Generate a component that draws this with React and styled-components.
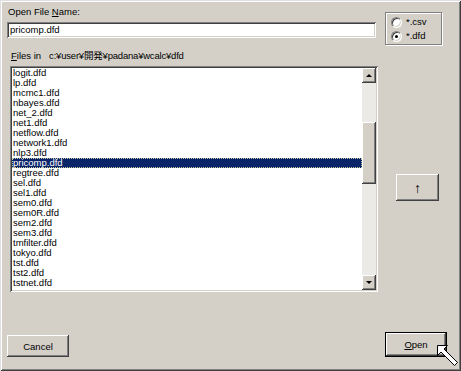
import styled, { createGlobalStyle } from "styled-components";

const files = [
  "logit.dfd", "lp.dfd", "mcmc1.dfd", "nbayes.dfd", "net_2.dfd", "net1.dfd",
  "netflow.dfd", "network1.dfd", "nlp3.dfd", "pricomp.dfd", "regtree.dfd",
  "sel.dfd", "sel1.dfd", "sem0.dfd", "sem0R.dfd", "sem2.dfd", "sem3.dfd",
  "tmfilter.dfd", "tokyo.dfd", "tst.dfd", "tst2.dfd", "tstnet.dfd",
];

const Global = createGlobalStyle`
  html, body { margin: 0; padding: 0; background: #d4d0c8; }
  body {
    font-family: "Liberation Sans", "Noto Sans CJK JP", sans-serif;
    font-size: 9.5px;
    color: #000;
  }
`;

export default function App() {
  return (
    <>
      <Global />
      <Window>
        <TopRow>
          <NameCol>
            <Label>Open File <u>N</u>ame:</Label>
            <TextInput>pricomp.dfd</TextInput>
          </NameCol>
          <TypeBox>
            <RadioRow><Radio /><span>*.csv</span></RadioRow>
            <RadioRow><Radio checked /><span>*.dfd</span></RadioRow>
          </TypeBox>
        </TopRow>

        <MiddleRow>
          <ListCol>
            <FilesLabel>
              <span><u>F</u>iles in</span>
              <Path>c:¥user¥開発¥padana¥wcalc¥dfd</Path>
            </FilesLabel>
            <ListBox>
              <Items>
                {files.map((f) => (
                  <Item key={f} selected={f === "pricomp.dfd"}>{f}</Item>
                ))}
              </Items>
              <ScrollBar>
                <ArrowBtn><Tri up /></ArrowBtn>
                <Track><Thumb /></Track>
                <ArrowBtn><Tri /></ArrowBtn>
              </ScrollBar>
            </ListBox>
          </ListCol>
          <UpButton>↑</UpButton>
        </MiddleRow>

        <BottomRow>
          <Button>Cancel</Button>
          <DefaultButton><u>O</u>pen</DefaultButton>
        </BottomRow>

        <Cursor width="24" height="24" viewBox="0 0 24 24">
          <polygon
            points="0.5,0.5 10.5,0.5 7,4 20.5,17.5 17.5,20.5 4,7 0.5,10.5"
            fill="#fff"
            stroke="#000"
            strokeWidth="1"
          />
        </Cursor>
      </Window>
    </>
  );
}

const raised = `
  background: #d4d0c8;
  box-shadow: inset -1px -1px #404040, inset 1px 1px #fff, inset -2px -2px #808080;
`;

const sunken = `
  box-shadow: inset 1px 1px #808080, inset -1px -1px #fff, inset 2px 2px #404040, inset -2px -2px #d4d0c8;
`;

const Window = styled.div`
  position: relative;
  width: 461px;
  height: 371px;
  box-sizing: border-box;
  padding: 6px 0 14px 7px;
  display: flex;
  flex-direction: column;
  background: #d4d0c8;
  box-shadow: inset 1px 1px #dfdfdf, inset -1px -1px #404040, inset 2px 2px #fff, inset -2px -2px #808080;
  overflow: hidden;
`;

const TopRow = styled.div`
  display: flex;
  align-items: flex-start;
`;

const NameCol = styled.div`
  display: flex;
  flex-direction: column;
  width: 369px;
`;

const Label = styled.div`
  height: 12px;
  line-height: 12px;
  margin-bottom: 4px;
  padding-left: 1px;
`;

const TextInput = styled.div`
  height: 16px;
  box-sizing: border-box;
  padding: 2px 3px;
  line-height: 12px;
  background: #fff;
  ${sunken}
`;

const TypeBox = styled.div`
  margin: 6px 0 0 9px;
  width: 57px;
  height: 33px;
  box-sizing: border-box;
  padding: 3px 0 0 5px;
  display: flex;
  flex-direction: column;
  gap: 2px;
  border: 1px solid #808080;
  box-shadow: inset 1px 1px #fff, 1px 1px #fff;
`;

const RadioRow = styled.div`
  display: flex;
  align-items: center;
  gap: 4px;
  height: 12px;
  line-height: 12px;
`;

const Radio = styled.span`
  position: relative;
  width: 11px;
  height: 11px;
  box-sizing: border-box;
  border-radius: 50%;
  background: #fff;
  border: 1px solid;
  border-color: #808080 #fff #fff #808080;
  box-shadow: inset 1px 1px #404040, inset -1px -1px #d4d0c8;

  &::after {
    content: "";
    display: ${(p) => (p.checked ? "block" : "none")};
    position: absolute;
    left: 3px;
    top: 3px;
    width: 3px;
    height: 3px;
    border-radius: 50%;
    background: #000;
  }
`;

const MiddleRow = styled.div`
  display: flex;
  align-items: flex-start;
  margin-top: 5px;
`;

const ListCol = styled.div`
  display: flex;
  flex-direction: column;
`;

const FilesLabel = styled.div`
  display: flex;
  gap: 8px;
  height: 12px;
  line-height: 12px;
  margin: 0 0 4px 4px;
`;

const Path = styled.span`
  letter-spacing: -0.2px;
`;

const ListBox = styled.div`
  margin-left: 3px;
  width: 368px;
  height: 226px;
  box-sizing: border-box;
  padding: 2px;
  display: flex;
  background: #fff;
  ${sunken}
`;

const Items = styled.div`
  flex: 1;
  display: flex;
  flex-direction: column;
`;

const Item = styled.div`
  height: 10px;
  line-height: 10px;
  padding-left: 1px;
  white-space: nowrap;
  color: ${(p) => (p.selected ? "#fff" : "#000")};
  background: ${(p) => (p.selected ? "#0a246a" : "transparent")};
  outline: ${(p) => (p.selected ? "1px dotted #c8c8a0" : "none")};
  outline-offset: -1px;
`;

const ScrollBar = styled.div`
  width: 14px;
  display: flex;
  flex-direction: column;
`;

const ArrowBtn = styled.div`
  height: 15px;
  display: flex;
  align-items: center;
  justify-content: center;
  ${raised}
`;

const Tri = styled.span`
  width: 0;
  height: 0;
  border-left: 3px solid transparent;
  border-right: 3px solid transparent;
  ${(p) => (p.up ? "border-bottom: 3px solid #000;" : "border-top: 3px solid #000;")}
`;

const Track = styled.div`
  flex: 1;
  background: #eceae6;
`;

const Thumb = styled.div`
  margin-top: 39px;
  height: 62px;
  ${raised}
`;

const UpButton = styled.div`
  margin: 124px 0 0 18px;
  width: 43px;
  height: 27px;
  display: flex;
  align-items: center;
  justify-content: center;
  font-size: 14px;
  line-height: 14px;
  ${raised}
`;

const BottomRow = styled.div`
  margin-top: auto;
  display: flex;
  justify-content: space-between;
  align-items: flex-end;
  padding-right: 14px;
`;

const Button = styled.div`
  width: 62px;
  height: 22px;
  display: flex;
  align-items: center;
  justify-content: center;
  ${raised}
`;

const DefaultButton = styled(Button)`
  height: 25px;
  box-sizing: border-box;
  border: 1px solid #000;
`;

const Cursor = styled.svg`
  position: absolute;
  left: 437px;
  top: 345px;
  display: block;
`;
